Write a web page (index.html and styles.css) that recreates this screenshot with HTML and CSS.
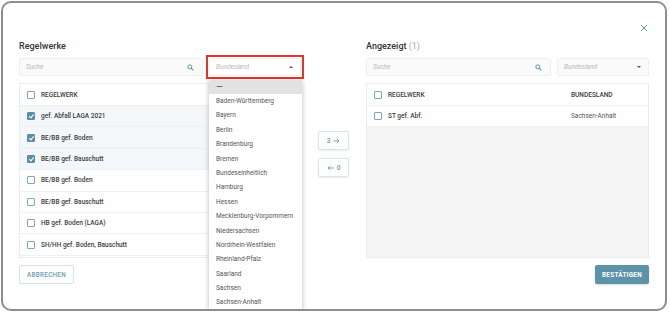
FILE: index.html
```html
<!DOCTYPE html>
<html lang="de">
<head>
<meta charset="utf-8">
<link rel="stylesheet" href="styles.css">
</head>
<body>
<div class="frame">
  <button class="close" aria-label="Schließen">
    <svg width="8" height="8" viewBox="0 0 8 8"><path d="M1 1L7 7M7 1L1 7" stroke="#5f97ab" stroke-width="1" fill="none"/></svg>
  </button>
  <div class="grid">
    <h2 class="title">Regelwerke</h2>
    <div></div>
    <h2 class="title">Angezeigt <span class="count">(1)</span></h2>

    <div class="toolbar">
      <div class="search"><span class="ph">Suche</span>
        <svg class="mag" width="7" height="7" viewBox="0 0 7 7"><circle cx="2.8" cy="2.8" r="2" stroke="#5f97ab" stroke-width="1" fill="none"/><path d="M4.3 4.3L6.3 6.3" stroke="#5f97ab" stroke-width="1.2"/></svg>
      </div>
      <div class="select open"><span class="ph">Bundesland</span><span class="caret up"></span>
        <ul class="dropdown">
          <li class="sel"><span class="dash">—</span></li>
          <li>Baden-Württemberg</li>
          <li>Bayern</li>
          <li>Berlin</li>
          <li>Brandenburg</li>
          <li>Bremen</li>
          <li>Bundeseinheitlich</li>
          <li>Hamburg</li>
          <li>Hessen</li>
          <li>Mecklenburg-Vorpommern</li>
          <li>Niedersachsen</li>
          <li>Nordrhein-Westfalen</li>
          <li>Rheinland-Pfalz</li>
          <li>Saarland</li>
          <li>Sachsen</li>
          <li>Sachsen-Anhalt</li>
        </ul>
      </div>
    </div>
    <div></div>
    <div class="toolbar">
      <div class="search"><span class="ph">Suche</span>
        <svg class="mag" width="7" height="7" viewBox="0 0 7 7"><circle cx="2.8" cy="2.8" r="2" stroke="#5f97ab" stroke-width="1" fill="none"/><path d="M4.3 4.3L6.3 6.3" stroke="#5f97ab" stroke-width="1.2"/></svg>
      </div>
      <div class="select"><span class="ph">Bundesland</span><span class="caret down"></span></div>
    </div>

    <div class="table">
      <div class="row head"><span class="cb"></span><span class="c1">REGELWERK</span></div>
      <div class="row checked"><span class="cb on"></span><span class="c1">gef. Abfall LAGA 2021</span></div>
      <div class="row checked"><span class="cb on"></span><span class="c1">BE/BB gef. Boden</span></div>
      <div class="row checked"><span class="cb on"></span><span class="c1">BE/BB gef. Bauschutt</span></div>
      <div class="row"><span class="cb"></span><span class="c1">BE/BB gef. Boden</span></div>
      <div class="row"><span class="cb"></span><span class="c1">BE/BB gef. Bauschutt</span></div>
      <div class="row"><span class="cb"></span><span class="c1">HB gef. Boden (LAGA)</span></div>
      <div class="row"><span class="cb"></span><span class="c1">SH/HH gef. Boden, Bauschutt</span></div>
      <div class="row"></div>
    </div>
    <div class="mover">
      <button class="mv">3 <svg class="arr" width="7" height="6" viewBox="0 0 7 6"><path d="M0.5 3H6M3.8 0.8L6 3L3.8 5.2" stroke="#6a9db0" stroke-width="0.9" fill="none"/></svg></button>
      <button class="mv"><svg class="arr" width="7" height="6" viewBox="0 0 7 6"><path d="M6.5 3H1M3.2 0.8L1 3L3.2 5.2" stroke="#6a9db0" stroke-width="0.9" fill="none"/></svg> 0</button>
    </div>
    <div class="table right">
      <div class="row head"><span class="cb"></span><span class="c1">REGELWERK</span><span class="c2">BUNDESLAND</span></div>
      <div class="row"><span class="cb"></span><span class="c1">ST gef. Abf.</span><span class="c2 norm">Sachsen-Anhalt</span></div>
      <div class="filler"></div>
    </div>

    <div class="foot"><button class="btn ghost">ABBRECHEN</button></div>
    <div></div>
    <div class="foot end"><button class="btn primary">BESTÄTIGEN</button></div>
  </div>
</div>
</body>
</html>
```
FILE: styles.css
```css
* { box-sizing: border-box; }
html, body { margin: 0; padding: 0; background: #fff; }
body { font-family: Roboto, "Liberation Sans", sans-serif; color: #444; }

.frame {
  position: relative;
  margin: 1px 0 0 1px;
  width: 666px;
  height: 310px;
  border: 2px solid #8e8e8e;
  border-radius: 10px;
  overflow: hidden;
  background: #fff;
}

.close {
  position: absolute;
  top: 16px;
  right: 16px;
  width: 10px;
  height: 10px;
  padding: 1px;
  border: 0;
  background: none;
}

.grid {
  display: grid;
  grid-template-columns: 282px 65px 283px;
  padding: 37px 0 0 16px;
}

.title {
  margin: 0;
  font-size: 9px;
  font-weight: 500;
  line-height: 12px;
  color: #333;
}
.count { color: #aaa; font-weight: 400; }

.toolbar {
  display: flex;
  gap: 6px;
  margin-top: 6px;
  height: 18px;
}
.search, .select {
  position: relative;
  display: flex;
  align-items: center;
  height: 18px;
  background: #fafafa;
  border: 1px solid #efefef;
  border-radius: 2px;
  padding: 0 6px;
}
.search { flex: 1; }
.select { width: 92px; flex: none; }
.select.open { background: #fff; }
.select.open::before {
  content: "";
  position: absolute;
  inset: -4px;
  border: 2px solid #e8322a;
  pointer-events: none;
}
.ph { font-size: 6.5px; font-style: italic; color: #b8b8b8; flex: 1; }
.mag { flex: none; margin-right: 2px; }
.caret { width: 0; height: 0; border-left: 2.5px solid transparent; border-right: 2.5px solid transparent; margin-right: 1px; }
.caret.up { border-bottom: 2.5px solid #555; }
.caret.down { border-top: 2.5px solid #555; }

.dropdown {
  position: absolute;
  z-index: 5;
  top: 21px;
  left: -1px;
  width: 93px;
  margin: 0;
  padding: 0;
  list-style: none;
  background: #fff;
  box-shadow: 0 1px 5px rgba(0,0,0,.28);
}
.dropdown li {
  height: 14.4px;
  line-height: 14.4px;
  padding-left: 7px;
  font-size: 6.5px;
  color: #555;
  white-space: nowrap;
}
.dropdown li.sel { background: #e2e2e2; height: 14px; line-height: 14px; color: #444; }
.dash { font-size: 8.5px; }

.table {
  margin-top: 7px;
  height: 175px;
  border: 1px solid #ededed;
  overflow: hidden;
  display: flex;
  flex-direction: column;
}
.row {
  display: flex;
  align-items: center;
  flex: none;
  height: 21.4px;
  padding-left: 7px;
  border-bottom: 1px solid #efefef;
  font-size: 6.5px;
  font-weight: 500;
  color: #3d3d3d;
}
.row.head { height: 22px; }
.row.checked { background: #f4f7f9; }
.c1 { margin-left: 6px; flex: 1; }
.c2 { width: 77px; flex: none; }
.c2.norm { font-weight: 400; color: #555; }
.filler { flex: 1; background: #f5f5f5; }

.cb {
  width: 8px;
  height: 8px;
  border: 1px solid #7fa9bb;
  border-radius: 1px;
  background: #fff;
  flex: none;
  position: relative;
}
.cb.on { background: #5b8ea4; border-color: #5b8ea4; }
.cb.on::after {
  content: "";
  position: absolute;
  left: 1.6px;
  top: 0.3px;
  width: 2px;
  height: 4px;
  border-right: 1.2px solid #fff;
  border-bottom: 1.2px solid #fff;
  transform: rotate(40deg);
}

.mover {
  display: flex;
  flex-direction: column;
  align-items: center;
  gap: 8px;
  padding-top: 55px;
}
.mv {
  display: flex;
  align-items: center;
  justify-content: center;
  gap: 3px;
  width: 31px;
  height: 19px;
  border: 1px solid #d8e5eb;
  border-radius: 2px;
  background: #fff;
  box-shadow: 0 1px 2px rgba(0,0,0,.08);
  font-family: inherit;
  font-size: 6.5px;
  font-weight: 500;
  color: #6a9db0;
  padding: 0;
}
.arr { flex: none; }

.foot { margin-top: 7px; display: flex; }
.foot.end { justify-content: flex-end; }
.btn {
  height: 19px;
  border-radius: 2px;
  font-family: inherit;
  font-size: 6.3px;
  font-weight: 500;
  letter-spacing: 0.3px;
  padding: 0;
}
.btn.ghost { width: 55px; background: #fff; border: 1px solid #d6e4ea; color: #6a9db0; }
.btn.primary { width: 54px; background: #5c93a7; border: 0; color: #fff; font-weight: 700; box-shadow: 0 1px 2px rgba(0,0,0,.15); }
```
